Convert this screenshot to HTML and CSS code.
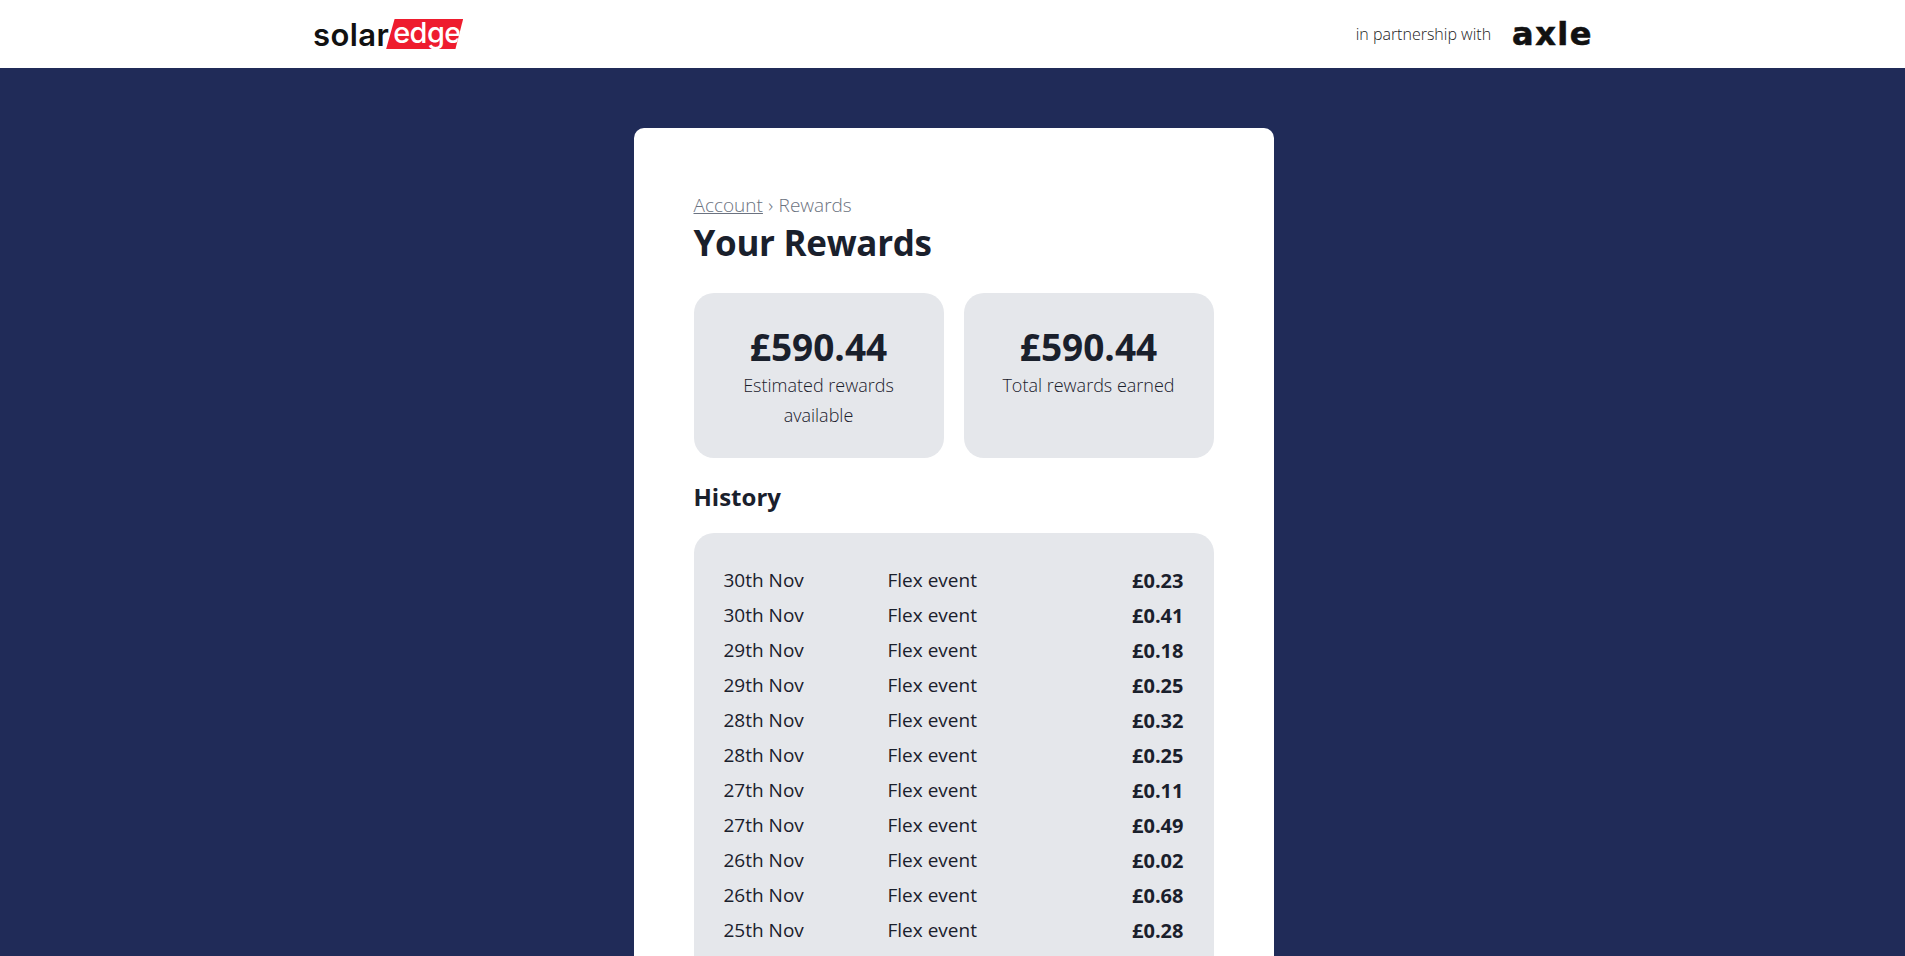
FILE: index.html
```html
<!DOCTYPE html>
<html lang="en">
<head>
    <meta charset="UTF-8">
    <meta name="viewport" content="width=device-width, initial-scale=1.0">
    <title>Your Rewards</title>
    <link rel="stylesheet" href="styles.css">
</head>
<body>
    <header class="topbar">
        <div class="logo-solar">solar<span class="logo-edge">edge</span></div>
        <div class="partner">
            <span class="partner-text">in partnership with</span>
            <span class="logo-axle">axle</span>
        </div>
    </header>

    <main class="page">
        <div class="card">
            <div class="crumbs"><a href="#">Account</a> › Rewards</div>
            <h1>Your Rewards</h1>

            <div class="stats">
                <div class="stat">
                    <div class="stat-value">£590.44</div>
                    <div class="stat-label">Estimated rewards available</div>
                </div>
                <div class="stat">
                    <div class="stat-value">£590.44</div>
                    <div class="stat-label">Total rewards earned</div>
                </div>
            </div>

            <h2>History</h2>

            <div class="history">
                <div class="row"><span class="date">30th Nov</span><span class="kind">Flex event</span><span class="amount">£0.23</span></div>
                <div class="row"><span class="date">30th Nov</span><span class="kind">Flex event</span><span class="amount">£0.41</span></div>
                <div class="row"><span class="date">29th Nov</span><span class="kind">Flex event</span><span class="amount">£0.18</span></div>
                <div class="row"><span class="date">29th Nov</span><span class="kind">Flex event</span><span class="amount">£0.25</span></div>
                <div class="row"><span class="date">28th Nov</span><span class="kind">Flex event</span><span class="amount">£0.32</span></div>
                <div class="row"><span class="date">28th Nov</span><span class="kind">Flex event</span><span class="amount">£0.25</span></div>
                <div class="row"><span class="date">27th Nov</span><span class="kind">Flex event</span><span class="amount">£0.11</span></div>
                <div class="row"><span class="date">27th Nov</span><span class="kind">Flex event</span><span class="amount">£0.49</span></div>
                <div class="row"><span class="date">26th Nov</span><span class="kind">Flex event</span><span class="amount">£0.02</span></div>
                <div class="row"><span class="date">26th Nov</span><span class="kind">Flex event</span><span class="amount">£0.68</span></div>
                <div class="row"><span class="date">25th Nov</span><span class="kind">Flex event</span><span class="amount">£0.28</span></div>
            </div>
        </div>
    </main>
</body>
</html>
```

FILE: styles.css
```css
html, body {
    height: 100%;
    overflow: hidden;
}
body {
    margin: 0;
    background: #202b58;
    color: #1a202c;
    font-family: 'Open Sans', sans-serif;
}
.topbar {
    height: 68px;
    background: white;
    display: flex;
    justify-content: space-between;
    align-items: center;
    padding: 0 312px 0 313px;
}
.logo-solar {
    font-family: Inter, sans-serif;
    font-weight: 600;
    font-size: 31px;
    letter-spacing: 0.4px;
    color: #111;
    display: flex;
    align-items: center;
}
.logo-edge {
    margin-left: -3px;
    width: 77px;
    box-sizing: border-box;
    height: 30px;
    padding-left: 7px;
    background: #ee1c2e;
    color: white;
    font-weight: 500;
    font-size: 29px;
    letter-spacing: -0.6px;
    line-height: 27px;
    clip-path: polygon(11% 0, 100% 0, 90% 100%, 0 100%);
}
.partner {
    display: flex;
    align-items: center;
    gap: 21px;
}
.partner-text {
    font-size: 16px;
    font-weight: 300;
    color: #222;
}
.logo-axle {
    font-family: 'DejaVu Sans', sans-serif;
    font-weight: 700;
    font-size: 32px;
    letter-spacing: 1.5px;
    color: #111;
    line-height: 30px;
    -webkit-text-stroke: 0.6px #111;
}
.page {
    display: flex;
    justify-content: center;
    padding: 60px 0 0 2px;
}
.card {
    width: 640px;
    min-height: 1000px;
    padding: 63px 60px 60px;
    box-sizing: border-box;
    background: white;
    border-radius: 10px;
}
.crumbs {
    font-size: 19px;
    font-weight: 300;
    line-height: 28px;
    word-spacing: 0.5px;
    color: #6b7280;
}
.crumbs a {
    color: #6b7280;
}
h1 {
    margin: 2px 0 28px;
    font-size: 35px;
    letter-spacing: -0.3px;
    line-height: 44px;
    font-weight: 700;
}
.stats {
    display: flex;
    gap: 20px;
    margin-bottom: 23px;
}
.stat {
    flex: 1;
    height: 165px;
    box-sizing: border-box;
    padding: 34px 20px 0;
    background: #e5e7eb;
    border-radius: 20px;
    text-align: center;
}
.stat-value {
    font-size: 37px;
    line-height: 40px;
    font-weight: 700;
}
.stat-label {
    margin-top: 3px;
    font-size: 18px;
    line-height: 30px;
    font-weight: 300;
}
h2 {
    margin: 0 0 20px;
    font-size: 24px;
    line-height: 32px;
    font-weight: 700;
}
.history {
    padding: 30px;
    background: #e5e7eb;
    border-radius: 20px;
    font-size: 19px;
}
.row {
    display: flex;
    height: 35px;
    line-height: 35px;
}
.date {
    width: 164px;
}
.kind {
    flex: 1;
}
.amount {
    font-size: 20px;
    font-weight: 700;
}
```
